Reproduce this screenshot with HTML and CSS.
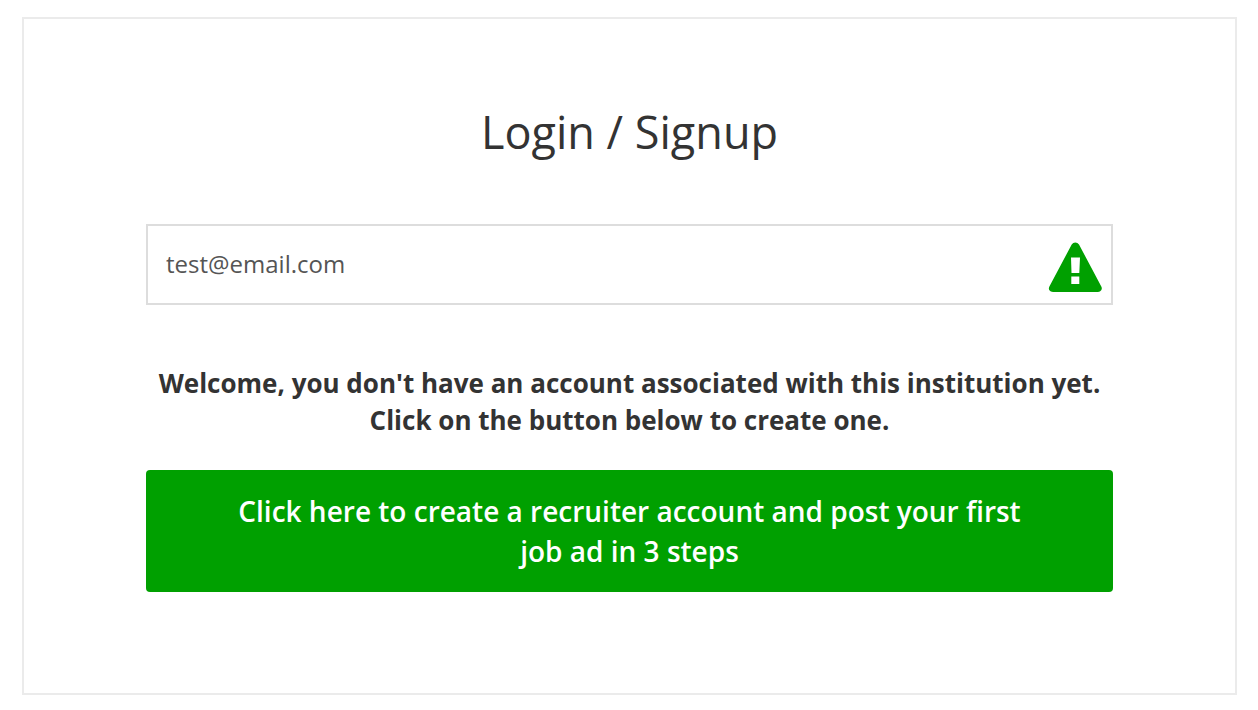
FILE: index.html
```html
<!DOCTYPE html>
<html lang="en">
<head>
  <meta charset="UTF-8">
  <meta name="viewport" content="width=device-width, initial-scale=1.0">
  <title>Login / Signup</title>
  <link rel="stylesheet" href="styles.css">
</head>
<body>
  <main class="login-box">
    <h1>Login / Signup</h1>
    <form>
      <div class="email-field">
        <input type="email" id="email" name="email" aria-label="Email" value="test@email.com">
        <svg class="warning-icon" viewBox="0 0 54 50" aria-hidden="true">
          <path fill="#00a000" fill-rule="evenodd" d="M23.700 2.500Q25 .5 27.300 .5T31 2.500L53.300 44.500Q54.400 46.500 53.200 48.300Q52.200 50 50 50H5Q2.500 50 1.400 48.300Q.3 46.500 1.400 44.500ZM23 15.500L23.500 31H31.300L32 15.500ZM23.300 34.500V42H31.300V34.500Z"/>
        </svg>
      </div>
      <p class="message">Welcome, you don't have an account associated with this institution yet. Click on the button below to create one.</p>
      <button type="submit">Click here to create a recruiter account and post your first job ad in 3 steps</button>
    </form>
  </main>
</body>
</html>
```

FILE: styles.css
```css
* {
  box-sizing: border-box;
}

body {
  margin: 0;
  padding: 17px 21px 15px 22px;
  background-color: #fff;
  color: #333;
  font-family: "Open Sans", sans-serif;
}

.login-box {
  border: 2px solid #ebebeb;
  padding: 83px 122px 101px;
}

h1 {
  margin: 0 0 62px;
  font-size: 45px;
  font-weight: 400;
  line-height: 60px;
  text-align: center;
}

.email-field {
  position: relative;
}

input {
  display: block;
  width: 100%;
  height: 81px;
  padding: 0 72px 2px 18px;
  border: 2px solid #ddd;
  background-color: #fff;
  color: #555;
  font-family: inherit;
  font-size: 24px;
}

.warning-icon {
  position: absolute;
  top: 18px;
  right: 11px;
  width: 54px;
  height: 50px;
}

.message {
  margin: 60px 0 31px;
  font-size: 26px;
  font-weight: 700;
  line-height: 37px;
  text-align: center;
}

button {
  display: block;
  width: 100%;
  padding: 21px 80px;
  border: 0;
  border-radius: 4px;
  background-color: #00a000;
  color: #fff;
  font-family: inherit;
  font-size: 28px;
  font-weight: 600;
  line-height: 40px;
  cursor: pointer;
}
```
